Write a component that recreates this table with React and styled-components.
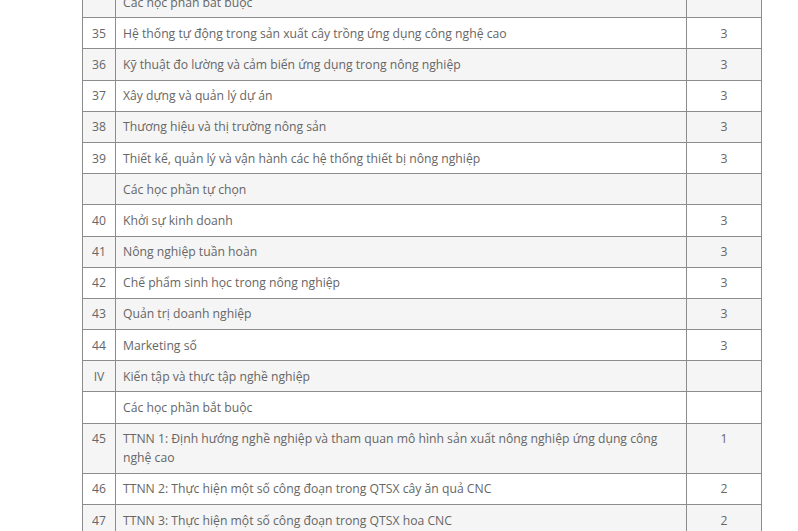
import React from "react";
import styled, { createGlobalStyle } from "styled-components";

const Global = createGlobalStyle`
  html, body { margin: 0; padding: 0; background: #fff; }
  body { font-family: "Open Sans", "Noto Sans", sans-serif; overflow: hidden; }
`;

const Page = styled.div`
  width: 798px;
  height: 531px;
  overflow: hidden;
  padding-left: 82px;
  box-sizing: border-box;
`;

const Table = styled.table`
  margin-top: -14px;
  width: 679px;
  border-collapse: collapse;
  table-layout: fixed;
  font-size: 12.2px;
  color: #666;
`;

const Row = styled.tr`
  background: ${(p) => (p.$striped ? "#f5f5f5" : "#ffffff")};
`;

const Cell = styled.td`
  border: 1px solid #8c8c8c;
  padding: 5.6px 7px;
  line-height: 19px;
  text-align: ${(p) => (p.$center ? "center" : "left")};
  vertical-align: top;
`;

const rows = [
  ["", "Các học phần bắt buộc", ""],
  ["35", "Hệ thống tự động trong sản xuất cây trồng ứng dụng công nghệ cao", "3"],
  ["36", "Kỹ thuật đo lường và cảm biến ứng dụng trong nông nghiệp", "3"],
  ["37", "Xây dựng và quản lý dự án", "3"],
  ["38", "Thương hiệu và thị trường nông sản", "3"],
  ["39", "Thiết kế, quản lý và vận hành các hệ thống thiết bị nông nghiệp", "3"],
  ["", "Các học phần tự chọn", ""],
  ["40", "Khởi sự kinh doanh", "3"],
  ["41", "Nông nghiệp tuần hoàn", "3"],
  ["42", "Chế phẩm sinh học trong nông nghiệp", "3"],
  ["43", "Quản trị doanh nghiệp", "3"],
  ["44", "Marketing số", "3"],
  ["IV", "Kiến tập và thực tập nghề nghiệp", ""],
  ["", "Các học phần bắt buộc", ""],
  ["45", "TTNN 1: Định hướng nghề nghiệp và tham quan mô hình sản xuất nông nghiệp ứng dụng công nghệ cao", "1"],
  ["46", "TTNN 2: Thực hiện một số công đoạn trong QTSX cây ăn quả CNC", "2"],
  ["47", "TTNN 3: Thực hiện một số công đoạn trong QTSX hoa CNC", "2"],
  ["48", "TTNN 4: Thực hiện một số công đoạn trong QTSX rau CNC", "2"],
];

export default function App() {
  return (
    <>
      <Global />
      <Page>
        <Table>
          <colgroup>
            <col style={{ width: 33 }} />
            <col style={{ width: 571 }} />
            <col style={{ width: 75 }} />
          </colgroup>
          <tbody>
            {rows.map((r, i) => (
              <Row key={i} $striped={i % 2 === 0}>
                <Cell $center>{r[0]}</Cell>
                <Cell>{r[1]}</Cell>
                <Cell $center>{r[2]}</Cell>
              </Row>
            ))}
          </tbody>
        </Table>
      </Page>
    </>
  );
}
